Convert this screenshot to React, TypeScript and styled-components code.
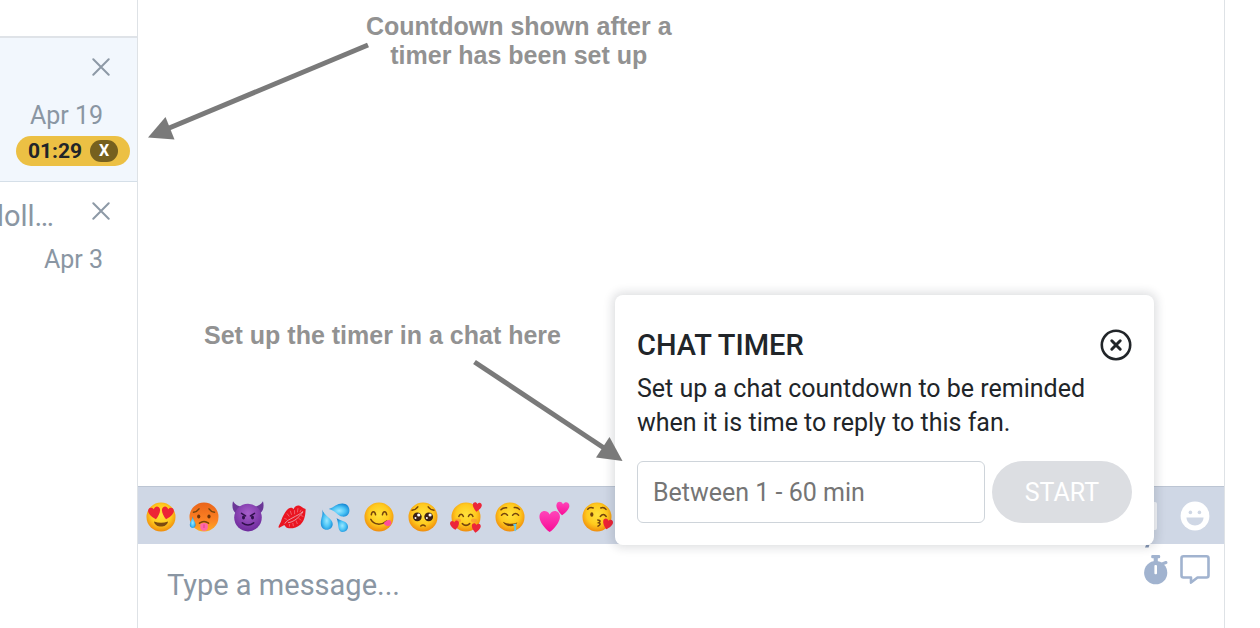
import React from "react";
import styled, { createGlobalStyle } from "styled-components";

const GlobalStyle = createGlobalStyle`
  * { box-sizing: border-box; }
  body { margin: 0; background: #fff; font-family: Roboto, "Liberation Sans", sans-serif; color: #212529; }
  button, input { font-family: inherit; }
  button { padding: 0; border: 0; background: none; cursor: pointer; }
  svg { display: block; }
`;

const Page = styled.div`
  display: flex;
  min-height: 100vh;
  padding-right: 35px;
  overflow: hidden;
`;

const Sidebar = styled.aside`
  flex: 0 0 138px;
  min-width: 0;
  border-right: 1px solid #dee2e6;
`;

const SidebarTop = styled.div`
  height: 38px;
  border-bottom: 2px solid #dfe3e8;
`;

const ChatRow = styled.article<{ $active?: boolean }>`
  display: flex;
  flex-direction: column;
  align-items: flex-end;
  height: 144px;
  padding-top: 12px;
  overflow: hidden;
  background: ${(p) => (p.$active ? "#f2f7fd" : "#fff")};
  border-bottom: 1px solid ${(p) => (p.$active ? "#d5dfe8" : "transparent")};
`;

const RowHead = styled.div`
  display: flex;
  align-items: flex-start;
  justify-content: flex-end;
  gap: 38px;
  height: 44px;
  padding-right: 27px;
`;

const FanName = styled.span`
  padding-top: 5px;
  font-size: 29px;
  line-height: 34px;
  color: #8a96a3;
  white-space: nowrap;
`;

const RowClose = styled.button`
  display: flex;
  align-items: center;
  height: 34px;
  color: #8d99a6;
`;

const RowDate = styled.time`
  padding-right: 34px;
  margin-top: 7px;
  font-size: 25px;
  line-height: 30px;
  color: #8a96a3;
`;

const CountdownBadge = styled.div`
  display: flex;
  align-items: center;
  gap: 8px;
  height: 30px;
  margin: 5px 7px 0 0;
  padding: 0 12px;
  border-radius: 15px;
  background: #ecc044;
  font-size: 21px;
  font-weight: 700;
`;

const BadgeButton = styled.button`
  width: 28px;
  height: 22px;
  border-radius: 11px;
  background: #76601f;
  color: #fff;
  font-size: 16px;
  line-height: 22px;
  font-weight: 700;
`;

const Chat = styled.main`
  position: relative;
  display: flex;
  flex: 1;
  flex-direction: column;
  min-width: 0;
  border-right: 1px solid #dee2e6;
`;

const Messages = styled.div`
  flex: 1;
`;

const EmojiBar = styled.div`
  display: flex;
  align-items: center;
  justify-content: space-between;
  height: 58px;
  padding: 0 14px 0 1px;
  border-top: 1px solid #bcc5d3;
  background: #cfd7e5;
`;

const EmojiList = styled.div`
  display: grid;
  grid-template-columns: repeat(11, 1fr);
  flex: 0 1 480px;
  padding-top: 2px;
`;

const EmojiButton = styled.button`
  display: flex;
  justify-content: center;
`;

const BarActions = styled.div`
  display: flex;
  align-items: center;
  gap: 23px;
`;

const KeyboardButton = styled.button`
  width: 30px;
  height: 28px;
  border-radius: 2px;
  background: #f4f6f9;
`;

const Composer = styled.form`
  display: flex;
  height: 84px;
  padding: 0 14px 0 29px;
`;

const MessageInput = styled.input`
  flex: 1;
  min-width: 0;
  height: 84px;
  padding: 0 0 2px;
  border: 0;
  outline: 0;
  background: none;
  font-size: 29px;
  &::placeholder { color: #8a96a3; opacity: 1; }
`;

const ComposerActions = styled.div`
  display: flex;
  align-items: flex-start;
  gap: 12px;
  color: #a1b3cf;
`;

const Popup = styled.section`
  position: absolute;
  right: 70px;
  bottom: 83px;
  width: 539px;
  padding: 34px 22px 22px;
  border-radius: 8px;
  background: #fff;
  box-shadow: 0 0 10px 3px rgba(30, 35, 50, 0.14);
`;

const PopupHead = styled.header`
  display: flex;
  align-items: center;
  justify-content: space-between;
  height: 32px;
`;

const PopupTitle = styled.h2`
  margin: 0;
  font-size: 29px;
  line-height: 32px;
  font-weight: 500;
`;

const PopupText = styled.p`
  margin: 11px 0 21px;
  font-size: 25px;
  line-height: 34px;
`;

const TimerForm = styled.form`
  display: flex;
  gap: 7px;
`;

const TimerInput = styled.input`
  flex: 1;
  min-width: 0;
  height: 62px;
  padding: 0 15px;
  border: 1px solid #ced4da;
  border-radius: 6px;
  font-size: 25px;
  &::placeholder { color: #757575; opacity: 1; }
`;

const StartButton = styled.button`
  width: 140px;
  height: 62px;
  border-radius: 31px;
  background: #dcdee2;
  color: #fff;
  font-size: 25px;
`;

const Note = styled.p`
  position: absolute;
  margin: 0;
  font-family: "Liberation Sans", Arial, sans-serif;
  font-size: 25px;
  line-height: 29px;
  font-weight: 700;
  text-align: center;
  color: #929292;
  white-space: nowrap;
`;

const CountdownNote = styled(Note)`
  top: 12px;
  left: 228px;
`;

const SetupNote = styled(Note)`
  right: 663px;
  bottom: 278px;
`;

const Arrow = styled.svg`
  position: absolute;
  color: #7a7a7a;
  pointer-events: none;
`;

const CountdownArrow = styled(Arrow)`
  top: 40px;
  left: 10px;
`;

const SetupArrow = styled(Arrow)`
  right: 600px;
  bottom: 164px;
`;

const Gradients = styled.svg`
  position: absolute;
`;

const CrossIcon = () => (
  <svg width="18" height="18" viewBox="0 0 18 18" fill="none" stroke="currentColor" strokeWidth="2" strokeLinecap="round">
    <path d="M1.3 1.3 16.7 16.7M16.7 1.3 1.3 16.7" />
  </svg>
);

const heart = (x: number, y: number, s: number, rot = 0) => (
  <path
    transform={`translate(${x} ${y}) rotate(${rot}) scale(${s})`}
    d="M0 5C-2.4 3.2-5-.1-5-2.4-5-5.4-1.6-6.3 0-3.6 1.6-6.3 5-5.4 5-2.4 5-.1 2.4 3.2 0 5Z"
  />
);

const Face = ({ fill = "url(#faceYellow)" }: { fill?: string }) => <circle cx="16" cy="16" r="14.5" fill={fill} />;
const ink = { fill: "none", stroke: "#74440d", strokeWidth: 1.5, strokeLinecap: "round" as const };

const emojis: { name: string; art: React.ReactNode }[] = [
  {
    name: "Heart eyes",
    art: (
      <>
        <Face />
        <g fill="#ed2436">{heart(9.7, 12.4, 1.2, -12)}{heart(22.3, 12.4, 1.2, 12)}</g>
        <path d="M9 20.5Q16 23.2 23 20.5C22 27.3 10 27.3 9 20.5Z" fill="#7c4b10" />
      </>
    ),
  },
  {
    name: "Hot face",
    art: (
      <>
        <Face fill="url(#faceHot)" />
        <path d="M5.5 11.2Q9 10.8 11 7.8M26.5 11.2Q23 10.8 21 7.8M11.5 22.2Q16 18.8 20.5 22.2" {...ink} />
        <ellipse cx="10.7" cy="15.5" rx="1.6" ry="2.1" fill="#6d3208" />
        <ellipse cx="21" cy="15.5" rx="1.6" ry="2.1" fill="#6d3208" />
        <path d="M12.3 23Q16 21 19.8 23V26.4C19.8 31 12.3 31 12.3 26.4Z" fill="#ff67a8" />
        <path d="M16 23.5V27" stroke="#e04285" strokeWidth="1" />
        <path d="M4.6 15.5C5.3 19 7.6 21 7.6 23.8 7.6 28 1.8 28 1.8 23.8 1.8 21 4 19 4.6 15.5Z" fill="url(#water)" />
      </>
    ),
  },
  {
    name: "Smiling devil",
    art: (
      <>
        <path d="M1 .3C-.5 6 1 11 5 13L10.5 5.8C6.5 5.5 3 3.8 1 .3ZM31 .3C32.5 6 31 11 27 13L21.5 5.8C25.5 5.5 29 3.8 31 .3Z" fill="#6b3797" />
        <circle cx="16" cy="16.6" r="13.8" fill="url(#facePurple)" />
        <path d="M9.5 12.4 13.6 14.9M22.5 12.4 18.4 14.9M10.3 21.8Q16 26.4 21.7 21.8" fill="none" stroke="#31104d" strokeWidth="1.5" strokeLinecap="round" />
        <ellipse cx="11.5" cy="16.5" rx="1.5" ry="1.9" fill="#31104d" />
        <ellipse cx="20.5" cy="16.5" rx="1.5" ry="1.9" fill="#31104d" />
      </>
    ),
  },
  {
    name: "Kiss mark",
    art: (
      <>
        <path d="M5 20.5C6.5 15.5 9.5 9.8 12.6 7.6 14.6 6.3 16.4 6.6 17.4 8.2 18.4 5.8 20.7 4.2 23 4.6 25.6 5.2 26.6 7.6 29.6 8 29.6 12 29 19.6 24.6 23.4 20.5 26.9 15.5 27.9 11.6 27 9.8 26.5 8.8 24.6 8.4 24L2.8 27 2.6 25.2Z" fill="#ea1521" />
        <path d="M8.8 22.6C10.5 19.4 14 18.4 17 16.6 20.5 14.6 23.5 13.6 27 10.4M12 21.7C17.5 21.2 23 16.6 27 10.8" fill="none" stroke="#e9a4ad" strokeWidth=".9" />
        <path d="M11 12.5 13.3 15.5M14.2 9.8 15.6 13.8M18.5 9.2 18.6 13.2M22 7.2 21.4 11.4M25.2 8.8 23.9 11M13.4 25.6 13.6 23M17.4 25.2 16.8 22M21.4 23 20 19.6M25 19.4 22.8 17.2M27.4 15.4 25 14.6M8.4 17.4 10.8 18.4" fill="none" stroke="#f27e88" strokeWidth=".7" />
      </>
    ),
  },
  {
    name: "Sweat drops",
    art: (
      <g fill="url(#water)">
        <path d="M9.8 8C15 6.4 18 2.6 23.4 2.6 27.6 2.6 30.4 5.6 30.4 9.4 30.4 13.4 27.4 16 23.6 15.6 18 15 16.6 9.4 9.8 8Z" />
        <path d="M3.2 8.5C4.6 14.5 13.7 17.6 13.7 23 13.7 26.4 11.2 28.8 7.8 28.8 4.2 28.8 1.8 26 1.8 22.2 1.8 17 4.4 14 3.2 8.5Z" />
        <path d="M17.6 17C20.6 20 29 19.8 29 25.6 29 28.8 26.8 31 23.8 31 17.8 31 20.2 22.6 17.6 17Z" />
      </g>
    ),
  },
  {
    name: "Savoring food",
    art: (
      <>
        <Face />
        <path d="M8.3 13.8C8.8 9.6 12 9.6 12.6 13.8M19.4 13.8C20 9.6 23.2 9.6 23.7 13.8M7.8 18.4C11 24.3 18.5 24.5 23.7 20" {...ink} />
        <path d="M20.7 22.2C22 20.6 24 19 26.3 19 28.6 19.4 29.2 23.5 26.4 24.7 23.8 25.7 21.8 24.3 20.7 22.2Z" fill="#ff4e9b" />
      </>
    ),
  },
  {
    name: "Pleading face",
    art: (
      <>
        <Face />
        <path d="M5 9.3Q8.6 9 10.8 5.8M27 9.3Q23.4 9 21.2 5.8M13.8 25Q16 23.2 18.2 25" {...ink} />
        <circle cx="10.3" cy="15.8" r="4.4" fill="#3b2216" />
        <circle cx="21.7" cy="15.8" r="4.4" fill="#3b2216" />
        <g fill="#fff">
          <circle cx="11.7" cy="14" r="1.6" /><circle cx="8.5" cy="17" r="1" />
          <circle cx="23.1" cy="14" r="1.6" /><circle cx="19.9" cy="17" r="1" />
        </g>
      </>
    ),
  },
  {
    name: "Smiling with hearts",
    art: (
      <>
        <Face />
        <path d="M8.8 15.4C9.8 12.4 12.4 12.4 13.4 15.4M18.4 15.4C19.4 12.4 22 12.4 23 15.4M12.3 22.6Q16 26.2 19.7 22.6" {...ink} />
        <ellipse cx="8" cy="19.5" rx="3" ry="2" fill="#f98b38" opacity=".6" />
        <ellipse cx="24" cy="19.5" rx="3" ry="2" fill="#f98b38" opacity=".6" />
        <g fill="#ec2639">{heart(27, 6.2, 0.9, 8)}{heart(4.8, 24.4, 0.9, -8)}{heart(26, 27.2, 0.9, 8)}</g>
      </>
    ),
  },
  {
    name: "Drooling face",
    art: (
      <>
        <Face />
        <path d="M7 8.8Q9 6.3 12.6 6.8M20.3 6.6Q23.5 6 25.4 8.4M7.5 14.2Q10.5 10.9 13.5 14.2M18.6 14.2Q21.6 10.9 24.6 14.2" {...ink} />
        <path d="M8.8 20.7C13.5 23.2 18.7 23.2 23.4 21.5 20.7 26.6 12.3 26.7 8.8 20.7Z" fill="#74440d" />
        <path d="M18.8 23.4 22.2 22.6V29.5Q20.8 31 20.3 29.2V25.2Z" fill="#61c9ee" />
      </>
    ),
  },
  {
    name: "Two hearts",
    art: <g fill="url(#pink)">{heart(11.7, 20.8, 2.05, 0)}{heart(24.6, 7.8, 1.3, 5)}</g>,
  },
  {
    name: "Blowing a kiss",
    art: (
      <>
        <Face />
        <path d="M6.7 8.2Q9 5.6 12.2 7M19.8 7Q22.8 5.7 25 8.4M19.3 15.5Q22.3 11.7 25.2 15.5M16.8 19Q21 19.4 17.5 21.8 21 22.8 17 25.2" {...ink} />
        <ellipse cx="10.8" cy="13.5" rx="1.6" ry="2.2" fill="#74440d" />
        <g fill="#ed2436">{heart(26.5, 23.3, 1, 14)}</g>
      </>
    ),
  },
];

export default function App() {
  const stop = (e: React.FormEvent) => e.preventDefault();
  return (
    <>
      <GlobalStyle />
      <Gradients width="0" height="0" aria-hidden="true">
        <defs>
          <radialGradient id="faceYellow" cx=".5" cy=".42" r=".58">
            <stop offset="0" stopColor="#ffe23c" /><stop offset=".6" stopColor="#ffca1e" /><stop offset="1" stopColor="#f08c0c" />
          </radialGradient>
          <linearGradient id="faceHot" x1="0" y1="0" x2="0" y2="1">
            <stop offset="0" stopColor="#e9641a" /><stop offset=".6" stopColor="#fc8123" /><stop offset="1" stopColor="#ffad23" />
          </linearGradient>
          <radialGradient id="facePurple" cx=".5" cy=".35" r=".65">
            <stop offset="0" stopColor="#a75fcb" /><stop offset="1" stopColor="#6e2a9c" />
          </radialGradient>
          <radialGradient id="water" cx=".5" cy=".55" r=".6">
            <stop offset="0" stopColor="#9be8ff" /><stop offset=".5" stopColor="#4cc4f6" /><stop offset="1" stopColor="#0c7fd0" />
          </radialGradient>
          <linearGradient id="pink" x1="0" y1="0" x2="0" y2="1">
            <stop offset="0" stopColor="#ff45b9" /><stop offset="1" stopColor="#f80b96" />
          </linearGradient>
        </defs>
      </Gradients>
      <Page>
        <Sidebar>
          <SidebarTop />
          <ChatRow $active>
            <RowHead>
              <RowClose aria-label="Close chat"><CrossIcon /></RowClose>
            </RowHead>
            <RowDate>Apr 19</RowDate>
            <CountdownBadge>
              01:29
              <BadgeButton aria-label="Cancel timer">X</BadgeButton>
            </CountdownBadge>
          </ChatRow>
          <ChatRow>
            <RowHead>
              <FanName>doll…</FanName>
              <RowClose aria-label="Close chat"><CrossIcon /></RowClose>
            </RowHead>
            <RowDate>Apr 3</RowDate>
          </ChatRow>
        </Sidebar>

        <Chat>
          <Messages />
          <EmojiBar>
            <EmojiList>
              {emojis.map((e) => (
                <EmojiButton key={e.name} aria-label={e.name}>
                  <svg width="32" height="32" viewBox="0 0 32 32" overflow="visible">{e.art}</svg>
                </EmojiButton>
              ))}
            </EmojiList>
            <BarActions>
              <KeyboardButton aria-label="Edit emojis" />
              <button aria-label="All emojis">
                <svg width="30" height="30" viewBox="0 0 30 30">
                  <circle cx="15" cy="15" r="14.4" fill="#fff" />
                  <circle cx="10.4" cy="11.4" r="1.8" fill="#cfd7e5" />
                  <circle cx="19.4" cy="11.4" r="1.8" fill="#cfd7e5" />
                  <path d="M6.4 16.6H23.6C22.8 27.2 7.2 27.2 6.4 16.6Z" fill="#cfd7e5" />
                </svg>
              </button>
            </BarActions>
          </EmojiBar>
          <Composer onSubmit={stop}>
            <MessageInput aria-label="Message" placeholder="Type a message..." />
            <ComposerActions>
              <button type="button" aria-label="Chat timer">
                <svg width="24" height="42" viewBox="0 0 24 42" fill="#a1b3cf">
                  <path d="M1 3.4 2 1H5.4L4.6 3.4Z" fill="#8395b3" />
                  <circle cx="11.7" cy="28.7" r="11.6" />
                  <path d="M7.2 12.2Q7.2 11 8.4 11H15Q16.2 11 16.2 12.2V13Q16.2 14.2 15 14.2H13.8V18H9.7V14.2H8.4Q7.2 14.2 7.2 13Z" />
                  <path d="M17.5 20.2 22 18.5" stroke="#a1b3cf" strokeWidth="3" strokeLinecap="round" />
                  <rect x="10.4" y="21" width="2.6" height="9.3" rx="1" fill="#fff" />
                </svg>
              </button>
              <button type="button" aria-label="Saved replies">
                <svg width="30" height="42" viewBox="0 0 30 42" fill="none" stroke="#a1b3cf" strokeWidth="2.6" strokeLinejoin="round">
                  <path d="M3.5 12.3H26.5Q28.5 12.3 28.5 14.3V31.5Q28.5 33.5 26.5 33.5H17.5L11 38.6V33.5H3.5Q1.5 33.5 1.5 31.5V14.3Q1.5 12.3 3.5 12.3Z" />
                </svg>
              </button>
            </ComposerActions>
          </Composer>

          <Popup aria-labelledby="timer-title">
            <PopupHead>
              <PopupTitle id="timer-title">CHAT TIMER</PopupTitle>
              <button aria-label="Close">
                <svg width="32" height="32" viewBox="0 0 32 32" fill="none" stroke="#212529" strokeLinecap="round">
                  <circle cx="16" cy="16" r="14.2" strokeWidth="2.6" />
                  <path d="M11.8 11.8 20.2 20.2M20.2 11.8 11.8 20.2" strokeWidth="3" />
                </svg>
              </button>
            </PopupHead>
            <PopupText>Set up a chat countdown to be reminded when it is time to reply to this fan.</PopupText>
            <TimerForm onSubmit={stop}>
              <TimerInput aria-label="Minutes" placeholder="Between 1 - 60 min" />
              <StartButton type="submit">START</StartButton>
            </TimerForm>
          </Popup>

          <CountdownNote>Countdown shown after a<br />timer has been set up</CountdownNote>
          <CountdownArrow width="224" height="102" viewBox="0 0 224 102" aria-hidden="true">
            <path d="M220 5 20 88.5" stroke="currentColor" strokeWidth="5" />
            <path d="M0 97.5 17.5 77 26.5 99.5Z" fill="currentColor" />
          </CountdownArrow>
          <SetupNote>Set up the timer in a chat here</SetupNote>
          <SetupArrow width="154" height="106" viewBox="0 0 154 106" aria-hidden="true">
            <path d="M4.5 4 134 90" stroke="currentColor" strokeWidth="5" />
            <path d="M152.5 103 139.5 79 126 99.5Z" fill="currentColor" />
          </SetupArrow>
        </Chat>
      </Page>
    </>
  );
}
